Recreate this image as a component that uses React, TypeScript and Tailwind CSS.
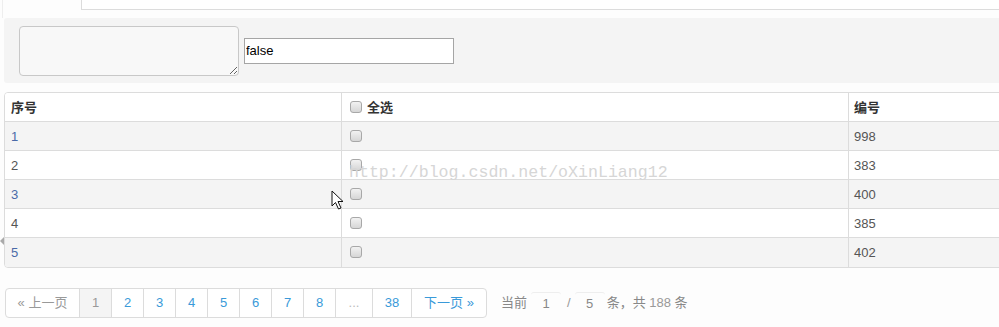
import React from "react";

const rows = [
    { id: 1, code: 998 },
    { id: 2, code: 383 },
    { id: 3, code: 400 },
    { id: 4, code: 385 },
    { id: 5, code: 402 },
];

const pages = ["1", "2", "3", "4", "5", "6", "7", "8"];

function Box() {
    return (
        <span className="inline-block w-[12px] h-[12px] rounded-[3px] border border-[#a8a8a8] bg-gradient-to-b from-[#f2f2f2] to-[#d6d6d6] shrink-0" />
    );
}

function Cursor() {
    return (
        <svg className="absolute left-[331px] top-[190px]" width="14" height="20" viewBox="0 0 14 20">
            <path d="M1 1 L1 16 L4.5 12.5 L7.5 19 L10 18 L7 11.5 L12 11.5 Z" fill="#fff" stroke="#111" strokeWidth="1" strokeLinejoin="round" />
        </svg>
    );
}

export default function App() {
    return (
        <div className="relative w-[999px] h-[327px] overflow-hidden bg-[#fdfdfd] text-[13px] text-[#555] font-['Liberation_Sans','Noto_Sans_CJK_SC',sans-serif]">
            {/* top panel edge */}
            <div className="h-[18px] flex">
                <div className="w-[3px] h-[18px] border-r border-[#eee]" />
                <div className="ml-[78px] flex-1 h-[10px] border-l border-b border-[#dcdcdc] bg-white" />
            </div>

            {/* form band */}
            <div className="ml-[4px] h-[65px] bg-[#f4f4f4] rounded-l-[3px] flex items-center pl-[15px]">
                <textarea className="w-[220px] h-[50px] rounded-[4px] border border-[#c8c8c8] bg-[#f8f8f8] resize-y" />
                <input
                    className="ml-[5px] w-[210px] h-[26px] border border-[#a5a5a5] bg-white px-[1px] text-[13px] text-black outline-none"
                    defaultValue="false"
                    readOnly
                />
            </div>

            {/* table */}
            <div className="mt-[9px] ml-[4px] w-[1000px] border border-[#dcdcdc] rounded-[4px] overflow-hidden">
                <div className="flex h-[29px] bg-white border-b border-[#dcdcdc] font-bold text-[#333]">
                    <div className="w-[337px] pl-[6px] pt-[5px] border-r border-[#dcdcdc]">序号</div>
                    <div className="w-[507px] pl-[8px] pt-[5px] border-r border-[#dcdcdc] flex items-start gap-[5px]">
                        <span className="mt-[3px] flex"><Box /></span>
                        全选
                    </div>
                    <div className="flex-1 pl-[5px] pt-[5px]">编号</div>
                </div>
                {rows.map((r, i) => (
                    <div
                        key={r.id}
                        className={
                            "flex h-[29px] " +
                            (i % 2 === 0 ? "bg-[#f4f4f4] " : "bg-white ") +
                            (i < rows.length - 1 ? "border-b border-[#dcdcdc]" : "")
                        }
                    >
                        <div className={"w-[337px] pl-[6px] pt-[5px] border-r border-[#dcdcdc] " + (i % 2 === 0 ? "text-[#4a6aa8]" : "text-[#555]")}>
                            {r.id}
                        </div>
                        <div className="w-[507px] pl-[8px] pt-[8px] border-r border-[#dcdcdc]">
                            <span className="flex"><Box /></span>
                        </div>
                        <div className="flex-1 pl-[5px] pt-[5px]">{r.code}</div>
                    </div>
                ))}
            </div>

            {/* pagination */}
            <div className="mt-[20px] ml-[5px] flex items-center">
                <ul className="flex h-[30px] border border-[#dcdcdc] rounded-[4px] overflow-hidden bg-white">
                    <li className="w-[74px] flex items-center justify-center text-[#999] border-r border-[#dcdcdc]">« 上一页</li>
                    {pages.map((p) => (
                        <li
                            key={p}
                            className={
                                "w-[32px] flex items-center justify-center border-r border-[#dcdcdc] " +
                                (p === "1" ? "bg-[#f4f4f4] text-[#999]" : "text-[#3a9ad9]")
                            }
                        >
                            {p}
                        </li>
                    ))}
                    <li className="w-[37px] flex items-center justify-center text-[#bbb] border-r border-[#dcdcdc]">...</li>
                    <li className="w-[39px] flex items-center justify-center text-[#3a9ad9] border-r border-[#dcdcdc]">38</li>
                    <li className="w-[74px] flex items-center justify-center text-[#3a9ad9]">下一页 »</li>
                </ul>
                <div className="ml-[14px] flex items-center text-[#888]">
                    <span>当前</span>
                    <span className="ml-[4px] w-[30px] h-[22px] border-t border-[#eee] rounded-[3px] flex items-center justify-center">1</span>
                    <span className="ml-[6px] text-[#999]">/</span>
                    <span className="ml-[4px] w-[30px] h-[22px] border-t border-[#eee] rounded-[3px] flex items-center justify-center">5</span>
                    <span className="ml-[2px]">条，共 <span className="text-[#999]">188</span> 条</span>
                </div>
            </div>

            {/* watermark */}
            <div className="absolute left-[349px] top-[165px] text-[16.6px] leading-none text-[#d6d6d6] font-['Liberation_Mono',monospace] pointer-events-none">
                http://blog.csdn.net/oXinLiang12
            </div>

            <Cursor />

            {/* left edge handle */}
            <div className="absolute left-0 top-[237px] w-0 h-0 border-y-[4px] border-y-transparent border-r-[4px] border-r-[#aaa]" />
        </div>
    );
}
